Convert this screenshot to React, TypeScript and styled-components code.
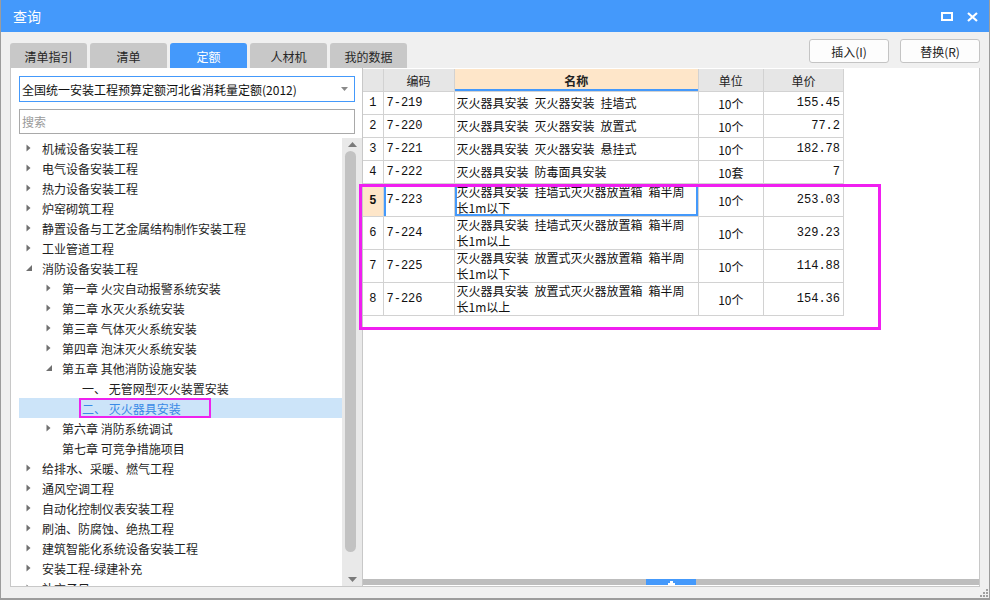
import React from 'react';
import styled, { createGlobalStyle } from 'styled-components';

const GlobalStyle = createGlobalStyle`
  html, body {
    margin: 0;
    padding: 0;
    background: #ffffff;
  }
  body {
    font-family: "Noto Sans CJK SC", "Liberation Sans", sans-serif;
    font-size: 12px;
    color: #222;
  }
`;

const BLUE = '#4499fb';
const CJK = '"Noto Sans CJK SC", "Liberation Sans", sans-serif';
const CELL = '"Liberation Mono", "Noto Sans CJK SC", monospace';

interface TreeNode {
  label: string;
  level: number;
  arrow?: 'closed' | 'open';
  selected?: boolean;
}

const treeNodes: TreeNode[] = [
  { label: '机械设备安装工程', level: 0, arrow: 'closed' },
  { label: '电气设备安装工程', level: 0, arrow: 'closed' },
  { label: '热力设备安装工程', level: 0, arrow: 'closed' },
  { label: '炉窑砌筑工程', level: 0, arrow: 'closed' },
  { label: '静置设备与工艺金属结构制作安装工程', level: 0, arrow: 'closed' },
  { label: '工业管道工程', level: 0, arrow: 'closed' },
  { label: '消防设备安装工程', level: 0, arrow: 'open' },
  { label: '第一章 火灾自动报警系统安装', level: 1, arrow: 'closed' },
  { label: '第二章 水灭火系统安装', level: 1, arrow: 'closed' },
  { label: '第三章 气体灭火系统安装', level: 1, arrow: 'closed' },
  { label: '第四章 泡沫灭火系统安装', level: 1, arrow: 'closed' },
  { label: '第五章 其他消防设施安装', level: 1, arrow: 'open' },
  { label: '一、 无管网型灭火装置安装', level: 2 },
  { label: '二、 灭火器具安装', level: 2, selected: true },
  { label: '第六章 消防系统调试', level: 1, arrow: 'closed' },
  { label: '第七章 可竞争措施项目', level: 1 },
  { label: '给排水、采暖、燃气工程', level: 0, arrow: 'closed' },
  { label: '通风空调工程', level: 0, arrow: 'closed' },
  { label: '自动化控制仪表安装工程', level: 0, arrow: 'closed' },
  { label: '刷油、防腐蚀、绝热工程', level: 0, arrow: 'closed' },
  { label: '建筑智能化系统设备安装工程', level: 0, arrow: 'closed' },
  { label: '安装工程-绿建补充', level: 0, arrow: 'closed' },
  { label: '补充子目', level: 0, arrow: 'closed' },
];

interface QuotaRow {
  code: string;
  name: string[];
  unit: string;
  price: string;
}

const rows: QuotaRow[] = [
  { code: '7-219', name: ['灭火器具安装 灭火器安装 挂墙式'], unit: '10个', price: '155.45' },
  { code: '7-220', name: ['灭火器具安装 灭火器安装 放置式'], unit: '10个', price: '77.2' },
  { code: '7-221', name: ['灭火器具安装 灭火器安装 悬挂式'], unit: '10个', price: '182.78' },
  { code: '7-222', name: ['灭火器具安装 防毒面具安装'], unit: '10套', price: '7' },
  { code: '7-223', name: ['灭火器具安装 挂墙式灭火器放置箱 箱半周', '长1m以下'], unit: '10个', price: '253.03' },
  { code: '7-224', name: ['灭火器具安装 挂墙式灭火器放置箱 箱半周', '长1m以上'], unit: '10个', price: '329.23' },
  { code: '7-225', name: ['灭火器具安装 放置式灭火器放置箱 箱半周', '长1m以下'], unit: '10个', price: '114.88' },
  { code: '7-226', name: ['灭火器具安装 放置式灭火器放置箱 箱半周', '长1m以上'], unit: '10个', price: '154.36' },
];

const tabs = ['清单指引', '清单', '定额', '人材机', '我的数据'];

// the grid font has half-width spaces, Noto's are narrower
const wide = (s: string) => s.replace(/ /g, '\u2002');

export default function App() {
  return (
    <>
      <GlobalStyle />
      <Window>
        <TitleBar>
          <Title>查询</Title>
          <TitleButtons>
            <svg width="12" height="9" viewBox="0 0 12 9">
              <rect x="1" y="1" width="10" height="7" fill="none" stroke="#fff" strokeWidth="2" />
            </svg>
            <svg width="11" height="10" viewBox="0 0 11 10">
              <path d="M1 1 L10 9 M10 1 L1 9" stroke="#fff" strokeWidth="2.2" />
            </svg>
          </TitleButtons>
        </TitleBar>

        <Body>
          <TopRow>
            <Tabs>
              {tabs.map((t) => (
                <Tab key={t} active={t === '定额'}>
                  {t}
                </Tab>
              ))}
            </Tabs>
            <Actions>
              <ActionButton>插入(I)</ActionButton>
              <ActionButton>替换(R)</ActionButton>
            </Actions>
          </TopRow>

          <Main>
            <LeftPanel>
              <Combo>
                <span>全国统一安装工程预算定额河北省消耗量定额(2012)</span>
                <svg width="7" height="4" viewBox="0 0 7 4">
                  <path d="M0 0 L7 0 L3.5 4 Z" fill="#8a8a8a" />
                </svg>
              </Combo>
              <Search placeholder="搜索" />
              <TreeArea>
                <TreeList>
                  {treeNodes.map((n) => (
                    <TreeRow key={n.label} level={n.level} selected={n.selected}>
                      <ArrowBox>
                        {n.arrow === 'closed' && (
                          <svg width="5" height="8" viewBox="0 0 5 8">
                            <path d="M0.5 0.5 L4.5 4 L0.5 7.5 Z" fill="#707070" />
                          </svg>
                        )}
                        {n.arrow === 'open' && (
                          <svg width="6" height="6" viewBox="0 0 6 6">
                            <path d="M6 0 L6 6 L0 6 Z" fill="#707070" />
                          </svg>
                        )}
                      </ArrowBox>
                      {n.selected ? <Marked>{n.label}</Marked> : <span>{n.label}</span>}
                    </TreeRow>
                  ))}
                </TreeList>
                <VScroll>
                  <svg width="9" height="5" viewBox="0 0 9 5">
                    <path d="M0 5 L4.5 0 L9 5 Z" fill="#7a7a7a" />
                  </svg>
                  <Thumb />
                  <svg width="9" height="5" viewBox="0 0 9 5">
                    <path d="M0 0 L9 0 L4.5 5 Z" fill="#7a7a7a" />
                  </svg>
                </VScroll>
              </TreeArea>
            </LeftPanel>

            <RightPanel>
              <Grid>
                <colgroup>
                  <col style={{ width: 20 }} />
                  <col style={{ width: 71 }} />
                  <col style={{ width: 244 }} />
                  <col style={{ width: 65 }} />
                  <col style={{ width: 80 }} />
                </colgroup>
                <thead>
                  <tr>
                    <HeadCell />
                    <HeadCell>编码</HeadCell>
                    <HeadCell sorted>名称</HeadCell>
                    <HeadCell>单位</HeadCell>
                    <HeadCell>单价</HeadCell>
                  </tr>
                </thead>
                <tbody>
                  {rows.map((r, i) => {
                    const current = i === 4;
                    return (
                      <Row key={r.code} tall={r.name.length > 1}>
                        <IndexCell current={current}>{i + 1}</IndexCell>
                        <CodeCell current={current}>{r.code}</CodeCell>
                        <NameCell current={current}>
                          {r.name.map((line) => (
                            <NameLine key={line}>{wide(line)}</NameLine>
                          ))}
                        </NameCell>
                        <UnitCell>{r.unit}</UnitCell>
                        <PriceCell>{r.price}</PriceCell>
                      </Row>
                    );
                  })}
                </tbody>
              </Grid>
              <Annotation />
              <HScroll>
                <HThumb>
                  <svg width="7" height="4" viewBox="0 0 7 4">
                    <path d="M2 0 L5 0 L5 2 L7 2 L7 4 L0 4 L0 2 L2 2 Z" fill="#fff" />
                  </svg>
                </HThumb>
              </HScroll>
            </RightPanel>
          </Main>

          <Footer>
            <Grip>
              {[0, 1, 2, 3, 4, 5].map((d) => (
                <GripDot key={d} />
              ))}
            </Grip>
          </Footer>
        </Body>
      </Window>
    </>
  );
}

const Window = styled.div`
  width: 990px;
  height: 600px;
  box-sizing: border-box;
  display: flex;
  flex-direction: column;
  background: #f0f0f0;
  border: 1px solid #9c9c9c;
  border-top: none;
  border-bottom-width: 2px;
  overflow: hidden;
`;

const TitleBar = styled.div`
  height: 32px;
  flex-shrink: 0;
  margin: 0 -1px;
  background: ${BLUE};
  display: flex;
  align-items: center;
  justify-content: space-between;
  padding: 0 12px 0 13px;
`;

const Title = styled.div`
  font-family: ${CJK};
  font-size: 14px;
  color: #fff;
  line-height: 16px;
`;

const TitleButtons = styled.div`
  display: flex;
  align-items: center;
  gap: 14px;
  padding-top: 1px;
`;

const Body = styled.div`
  flex: 1;
  display: flex;
  flex-direction: column;
  padding: 0 9px 0 9px;
  min-height: 0;
`;

const TopRow = styled.div`
  height: 36px;
  flex-shrink: 0;
  display: flex;
  justify-content: space-between;
`;

const Tabs = styled.div`
  display: flex;
  align-items: flex-end;
  gap: 3px;
`;

const Tab = styled.div<{ active?: boolean }>`
  width: 77px;
  height: 25px;
  box-sizing: border-box;
  display: flex;
  align-items: center;
  justify-content: center;
  border-radius: 3px 3px 0 0;
  background: ${({ active }) => (active ? BLUE : '#c8c8c8')};
  color: ${({ active }) => (active ? '#fff' : '#262626')};
  font-family: ${CJK};
  font-size: 12px;
  padding-top: 1px;
`;

const Actions = styled.div`
  display: flex;
  gap: 11px;
  padding-top: 7px;
`;

const ActionButton = styled.button`
  width: 80px;
  height: 24px;
  box-sizing: border-box;
  background: #fdfdfd;
  border: 1px solid #c4c4c4;
  border-radius: 3px;
  font-family: ${CJK};
  font-size: 12px;
  color: #222;
  padding: 0;
`;

const Main = styled.div`
  height: 519px;
  flex-shrink: 0;
  display: flex;
`;

const LeftPanel = styled.div`
  width: 352px;
  box-sizing: border-box;
  background: #fff;
  border-left: 1px solid #c8c8c8;
  border-bottom: 1px solid #c8c8c8;
  padding: 8px 0 0 8px;
  display: flex;
  flex-direction: column;
  gap: 7px;
`;

const Combo = styled.div`
  width: 336px;
  height: 26px;
  box-sizing: border-box;
  border: 1px solid ${BLUE};
  display: flex;
  align-items: center;
  justify-content: space-between;
  padding: 0 6px 0 2px;
  font-family: ${CJK};
  font-size: 12px;
  color: #111;
  flex-shrink: 0;
`;

const Search = styled.input`
  width: 336px;
  height: 25px;
  box-sizing: border-box;
  border: 1px solid #a9a9a9;
  padding: 0 2px;
  font-family: ${CJK};
  font-size: 12px;
  outline: none;
  flex-shrink: 0;
  &::placeholder {
    color: #9a9a9a;
  }
`;

const TreeArea = styled.div`
  flex: 1;
  min-height: 0;
  display: flex;
  margin-top: -3px;
  overflow: hidden;
`;

const TreeList = styled.div`
  flex: 1;
  overflow: hidden;
`;

const TreeRow = styled.div<{ level: number; selected?: boolean }>`
  height: 20px;
  display: flex;
  align-items: center;
  padding-left: ${({ level }) => level * 20}px;
  background: ${({ selected }) => (selected ? '#cce4f9' : 'transparent')};
  color: ${({ selected }) => (selected ? '#3a8ae6' : '#1e1e1e')};
  font-family: ${CJK};
  font-size: 12px;
  white-space: nowrap;
`;

const ArrowBox = styled.span`
  width: 23px;
  flex-shrink: 0;
  display: flex;
  align-items: center;
  padding-left: 7px;
  box-sizing: border-box;
`;

const Marked = styled.span`
  display: inline-flex;
  align-items: center;
  width: 132px;
  height: 20px;
  box-sizing: border-box;
  margin-left: -3px;
  padding-left: 1px;
  border: 2px solid #ee22ee;
`;

const VScroll = styled.div`
  width: 20px;
  flex-shrink: 0;
  background: #e9e9e9;
  display: flex;
  flex-direction: column;
  align-items: center;
  padding: 4px 0 4px;
  box-sizing: border-box;
  gap: 4px;
`;

const Thumb = styled.div`
  width: 11px;
  height: 401px;
  border-radius: 6px;
  background: #c2c2c2;
  margin-right: 3px;
  margin-bottom: auto;
`;

const RightPanel = styled.div`
  flex: 1;
  position: relative;
  background: #fff;
  border: 1px solid #c8c8c8;
  border-top: none;
  display: flex;
  flex-direction: column;
  padding-top: 1px;
`;

const Grid = styled.table`
  width: 481px;
  table-layout: fixed;
  border-collapse: collapse;
  font-family: ${CELL};
  font-size: 12px;
  color: #111;
`;

const HeadCell = styled.th<{ sorted?: boolean }>`
  height: 22px;
  padding: 0;
  border: 1px solid #d2d2d2;
  border-top: none;
  border-left: none;
  background: ${({ sorted }) => (sorted ? '#fee6c9' : '#e6e6e6')};
  box-shadow: ${({ sorted }) => (sorted ? `inset 0 -2px 0 ${BLUE}` : 'none')};
  font-family: ${CJK};
  font-weight: ${({ sorted }) => (sorted ? 700 : 400)};
  font-size: 12px;
  color: #222;
  text-align: center;
`;

const Row = styled.tr<{ tall?: boolean }>`
  height: ${({ tall }) => (tall ? 33 : 23)}px;
`;

const BaseCell = styled.td`
  padding: 0;
  border: 1px solid #d2d2d2;
  border-left: none;
  vertical-align: middle;
  white-space: nowrap;
  overflow: hidden;
`;

const IndexCell = styled(BaseCell)<{ current?: boolean }>`
  text-align: center;
  background: ${({ current }) => (current ? '#fee6c9' : '#fff')};
  font-weight: ${({ current }) => (current ? 700 : 400)};
  font-family: ${({ current }) => (current ? '"Liberation Sans", sans-serif' : CELL)};
`;

const CodeCell = styled(BaseCell)<{ current?: boolean }>`
  padding-left: 3px;
  box-shadow: ${({ current }) => (current ? `inset 2px 0 0 ${BLUE}` : 'none')};
`;

const NameCell = styled(BaseCell)<{ current?: boolean }>`
  padding-left: 2px;
  font-family: ${CJK};
  box-shadow: ${({ current }) => (current ? `inset 0 0 0 2px ${BLUE}` : 'none')};
`;

const NameLine = styled.div`
  height: 16px;
  line-height: 16px;
`;

const UnitCell = styled(BaseCell)`
  text-align: center;
  font-family: ${CJK};
`;

const PriceCell = styled(BaseCell)`
  text-align: right;
  padding-right: 3px;
`;

const Annotation = styled.div`
  position: absolute;
  left: -4px;
  top: 116px;
  width: 522px;
  height: 146px;
  box-sizing: border-box;
  border: 3px solid #f01ff0;
  pointer-events: none;
`;

const HScroll = styled.div`
  margin-top: auto;
  margin-bottom: 1px;
  height: 6px;
  background: #bdbdbd;
  display: flex;
  justify-content: center;
`;

const HThumb = styled.div`
  width: 50px;
  height: 6px;
  background: ${BLUE};
  display: flex;
  align-items: flex-end;
  justify-content: center;
`;

const Footer = styled.div`
  flex: 1;
  display: flex;
  justify-content: flex-end;
  align-items: flex-end;
  margin-right: -9px;
`;

const Grip = styled.div`
  width: 9px;
  height: 9px;
  display: grid;
  grid-template-columns: repeat(3, 3px);
  grid-template-rows: repeat(3, 3px);
  & > span:nth-child(1) { grid-column: 3; grid-row: 1; }
  & > span:nth-child(2) { grid-column: 2; grid-row: 2; }
  & > span:nth-child(3) { grid-column: 3; grid-row: 2; }
  & > span:nth-child(4) { grid-column: 1; grid-row: 3; }
  & > span:nth-child(5) { grid-column: 2; grid-row: 3; }
  & > span:nth-child(6) { grid-column: 3; grid-row: 3; }
`;

const GripDot = styled.span`
  width: 2px;
  height: 2px;
  background: #a0a0a0;
`;
